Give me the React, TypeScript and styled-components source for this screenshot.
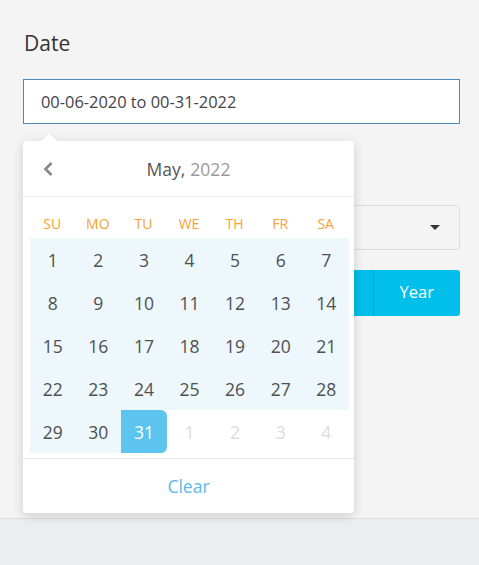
import React from 'react'
import styled, { createGlobalStyle } from 'styled-components'

const GlobalStyle = createGlobalStyle`
  body {
    margin: 0;
    background: #f4f4f4;
    font-family: 'Open Sans', 'Liberation Sans', sans-serif;
  }
  * { box-sizing: border-box; }
`

const Page = styled.div`
  height: 565px;
  display: flex;
  flex-direction: column;
  overflow: hidden;
`

const Content = styled.div`
  height: 518px;
  padding: 29px 19px 0 23px;
  display: flex;
  flex-direction: column;
`

const Footer = styled.div`
  flex: 1;
  background: #eceef2;
  border-top: 1px solid #dedfe2;
`

const Label = styled.label`
  display: block;
  font-size: 21px;
  line-height: 29px;
  color: #333;
  padding-left: 1px;
`

const Field = styled.div`
  position: relative;
  margin-top: 21px;
`

const Input = styled.div`
  height: 45px;
  border: 1px solid #4a89bc;
  background: #fff;
  padding: 0 17px;
  display: flex;
  align-items: center;
  font-size: 16.4px;
  color: #444;
`

const Select = styled.div`
  margin-top: 81px;
  height: 45px;
  border: 1px solid #dcdcdc;
  border-radius: 4px;
  display: flex;
  align-items: center;
  justify-content: flex-end;
  padding-right: 19px;
`

const Caret = styled.span`
  width: 0;
  height: 0;
  border-left: 5px solid transparent;
  border-right: 5px solid transparent;
  border-top: 5px solid #333;
`

const ButtonGroup = styled.div`
  margin-top: 20px;
  display: grid;
  grid-template-columns: repeat(5, 1fr);
  border-radius: 3px;
  overflow: hidden;
  height: 46px;
`

const GroupButton = styled.button`
  border: 0;
  border-left: 1px solid #00a6d2;
  background: #00bfea;
  color: #fff;
  font-family: inherit;
  font-size: 16.5px;
  padding: 0 0 3px;
  &:first-child { border-left: 0; }
`

const Popup = styled.div`
  position: absolute;
  top: 62px;
  left: 0;
  width: 331px;
  background: #fff;
  border-radius: 4px;
  box-shadow: 0 3px 12px rgba(0, 0, 0, 0.16);
  z-index: 2;

  &::before {
    content: '';
    position: absolute;
    top: -8px;
    left: 18px;
    width: 0;
    height: 0;
    border-left: 8px solid transparent;
    border-right: 8px solid transparent;
    border-bottom: 8px solid #fff;
    filter: drop-shadow(0 -1px 1px rgba(0, 0, 0, 0.06));
  }
`

const Header = styled.div`
  position: relative;
  height: 56px;
  border-bottom: 1px solid #e9e9e9;
  display: flex;
  align-items: center;
  justify-content: center;
  font-size: 17.5px;
  color: #555;
`

const PrevButton = styled.button`
  position: absolute;
  left: 19px;
  top: 19px;
  border: 0;
  background: none;
  padding: 0;
  display: flex;
`

const Year = styled.span`
  color: #9a9a9a;
  margin-left: 5px;
`

const Grid = styled.div`
  padding: 0 5px 5px 7px;
  display: grid;
  grid-template-columns: repeat(7, 1fr);
`

const WeekDay = styled.div`
  height: 41px;
  display: flex;
  align-items: center;
  justify-content: center;
  font-size: 14px;
  color: #f8a230;
  padding-top: 11px;
  padding-right: 1px;
`

const Day = styled.div<{ $range?: boolean; $selected?: boolean; $muted?: boolean }>`
  height: 43px;
  display: flex;
  align-items: center;
  justify-content: center;
  font-size: 17.5px;
  color: ${({ $selected, $muted }) => ($selected ? '#fff' : $muted ? '#dcdcdc' : '#505050')};
  background: ${({ $selected, $range }) => ($selected ? '#5dc4f0' : $range ? '#edf7fc' : 'transparent')};
  border-radius: ${({ $selected }) => ($selected ? '0 6px 6px 0' : '0')};
`

const PopupFooter = styled.div`
  height: 55px;
  border-top: 1px solid #e9e9e9;
  display: flex;
  align-items: center;
  justify-content: center;
  font-size: 17.5px;
  color: #5bb9e8;
`

const weekDays = ['SU', 'MO', 'TU', 'WE', 'TH', 'FR', 'SA']

const days = [
  ...Array.from({ length: 31 }, (_, i) => ({ n: i + 1, muted: false })),
  ...[1, 2, 3, 4].map((n) => ({ n, muted: true })),
]

// only the last range button shows past the open calendar
const ranges = ['', '', '', '', 'Year']

export default function App() {
  return (
    <>
      <GlobalStyle />
      <Page>
        <Content>
          <Label>Date</Label>
          <Field>
            <Input>00-06-2020 to 00-31-2022</Input>
            <Popup>
              <Header>
                <PrevButton>
                  <svg width="12" height="18" viewBox="0 0 12 18">
                    <path d="M9.5 3 L3.5 9 L9.5 15" fill="none" stroke="#8a8a8a" strokeWidth="2.8" />
                  </svg>
                </PrevButton>
                May,<Year>2022</Year>
              </Header>
              <Grid>
                {weekDays.map((d) => (
                  <WeekDay key={d}>{d}</WeekDay>
                ))}
                {days.map((d, i) => (
                  <Day
                    key={i}
                    $muted={d.muted}
                    $range={!d.muted && d.n < 31}
                    $selected={!d.muted && d.n === 31}
                  >
                    {d.n}
                  </Day>
                ))}
              </Grid>
              <PopupFooter>Clear</PopupFooter>
            </Popup>
            <Select>
              <Caret />
            </Select>
            <ButtonGroup>
              {ranges.map((b, i) => (
                <GroupButton key={i}>{b}</GroupButton>
              ))}
            </ButtonGroup>
          </Field>
        </Content>
        <Footer />
      </Page>
    </>
  )
}
